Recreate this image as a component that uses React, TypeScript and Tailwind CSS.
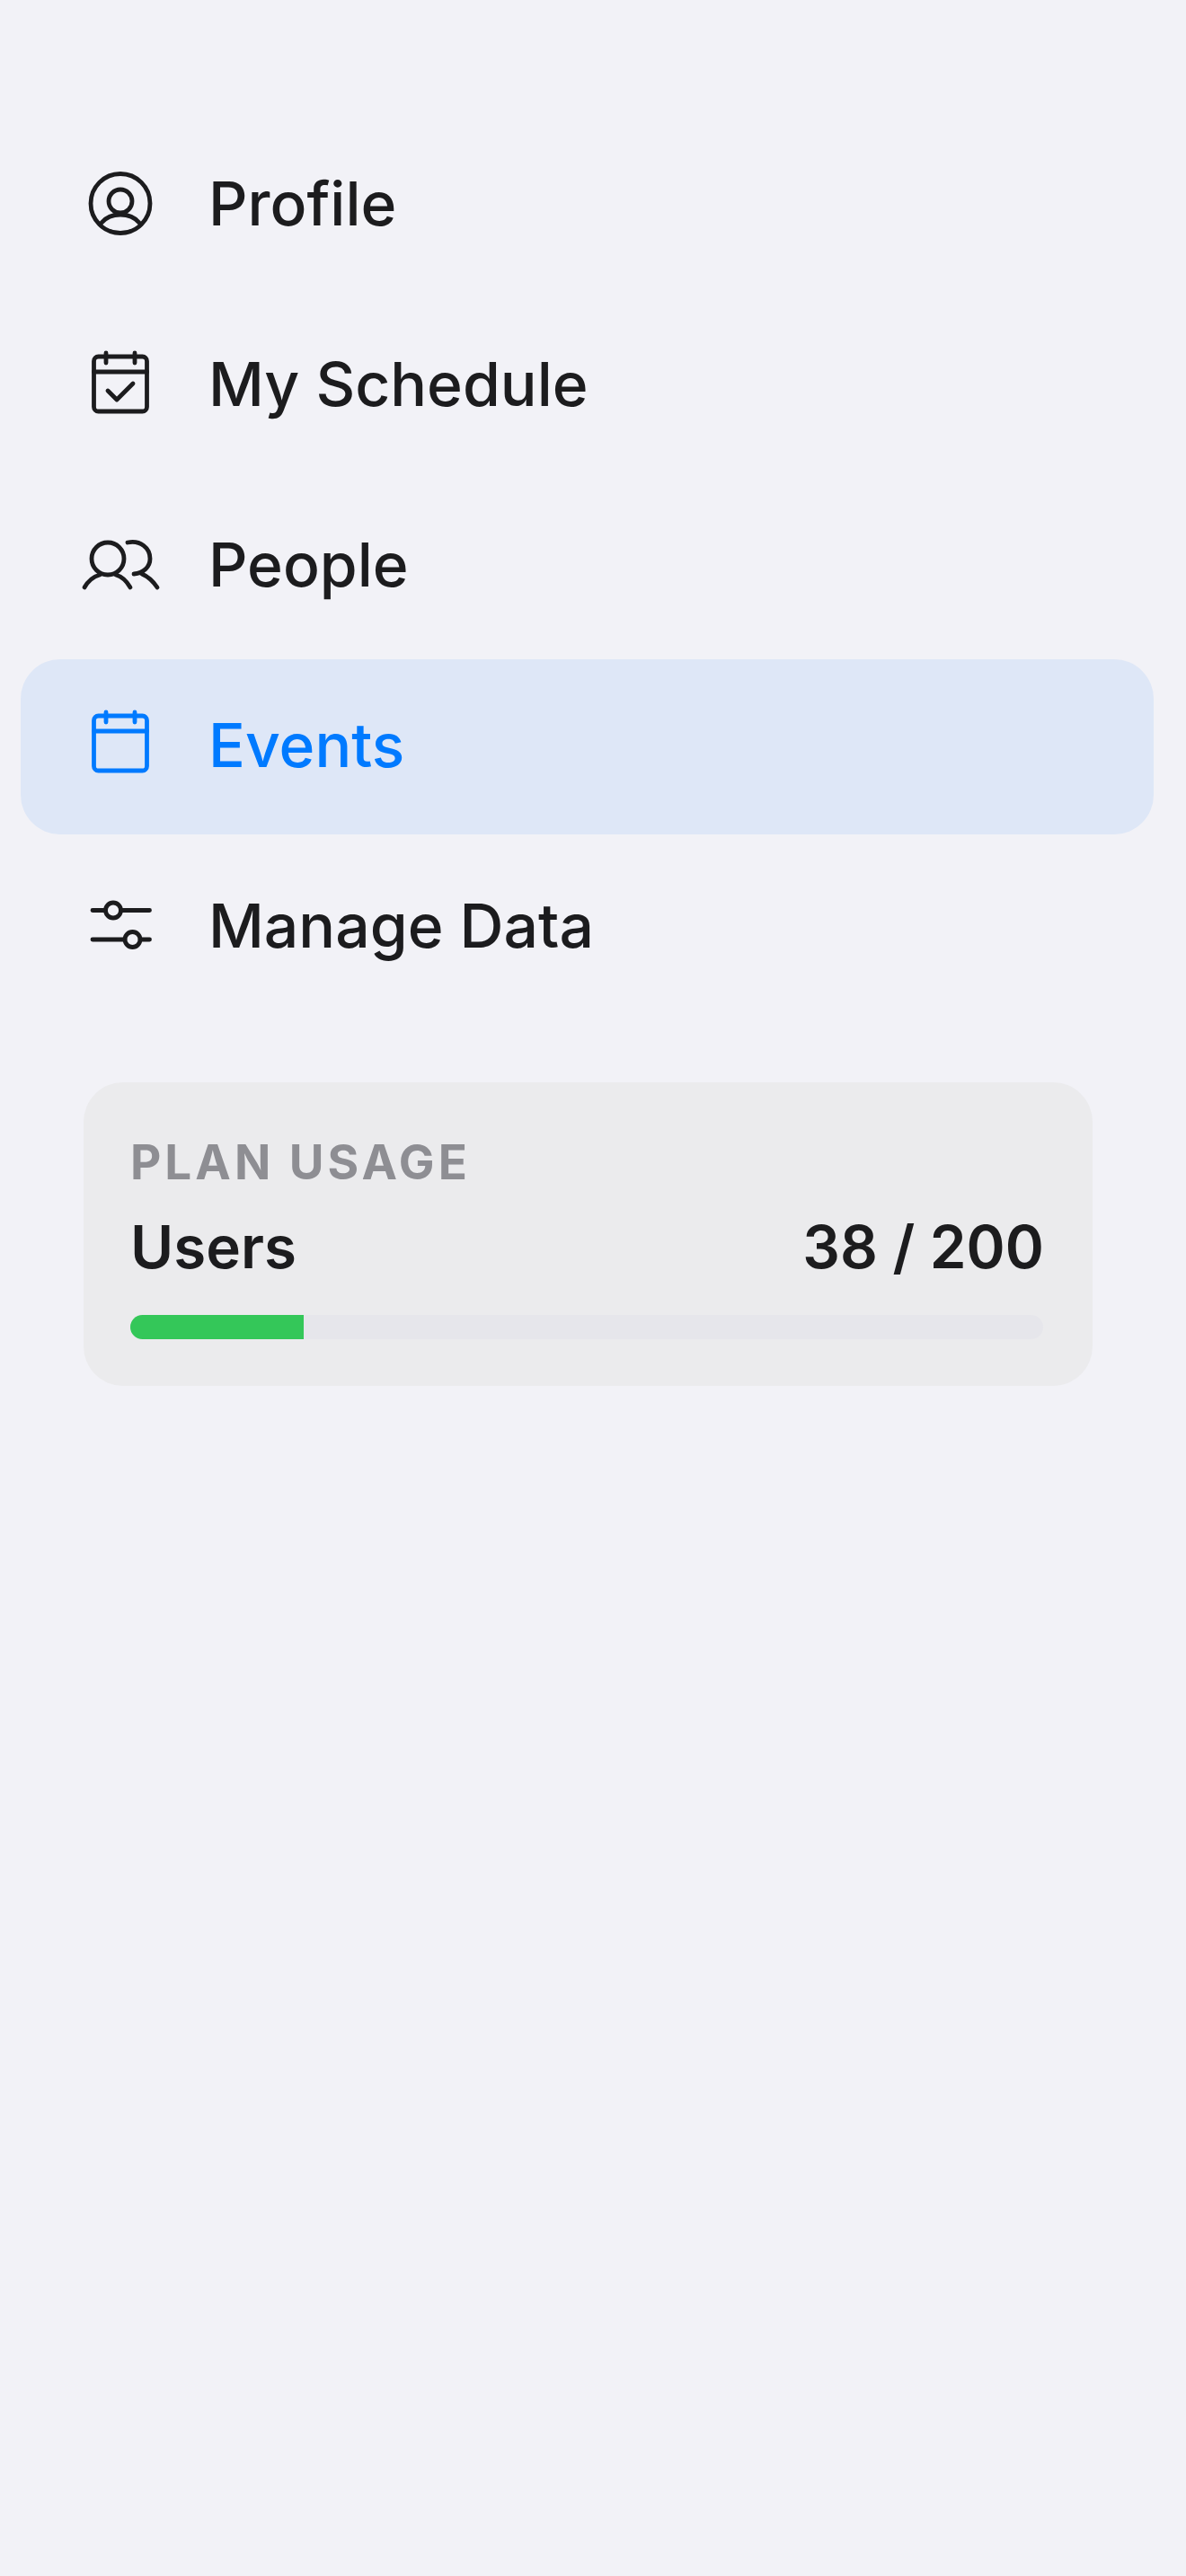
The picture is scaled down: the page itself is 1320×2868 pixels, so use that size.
const CalendarBase = () => (
  <>
    <rect x="20.5" y="19" width="59" height="61" rx="5" />
    <path d="M20.5 36h59M34 15v11M66 15v11" />
  </>
);

const icons: Record<string, React.ReactNode> = {
  profile: (
    <>
      <circle cx="50" cy="49.5" r="33" />
      <circle cx="50" cy="47" r="13" />
      <path d="M29 71C34 65 42 62 50 62C58 62 66 65 71 71" />
    </>
  ),
  schedule: (
    <>
      <CalendarBase />
      <path d="M36 57l10 10l18-18" />
    </>
  ),
  people: (
    <>
      <circle cx="36" cy="43" r="18" />
      <path d="M10 75C14 68 20 63 27 61M61 75C57 68 52 63 45 61" />
      <path d="M58 25C72 22 83 31 83 43C83 52 76 59 65 60M74 60C81 63 87 69 91 75" />
    </>
  ),
  events: (
    <g transform="translate(0 -2)">
      <CalendarBase />
    </g>
  ),
  manage: (
    <>
      <circle cx="42" cy="32.5" r="8.5" />
      <circle cx="63.5" cy="65" r="8.5" />
      <path d="M19 32.5h14.5M50.5 32.5h32M19 65h36M72 65h10.5" />
    </>
  ),
};

const navItems = [
  { label: "Profile", icon: "profile" },
  { label: "My Schedule", icon: "schedule" },
  { label: "People", icon: "people" },
  { label: "Events", icon: "events", active: true },
  { label: "Manage Data", icon: "manage" },
];

export default function App() {
  return (
    <div className="min-h-[2868px] bg-[#f2f2f7] pt-[131px] font-['Inter',sans-serif] text-[#1c1c1e]">
      {/* Nav */}
      <div className="ml-[23px] mr-[36px] flex flex-col gap-[6px]">
        {navItems.map((item) => (
          <div
            key={item.label}
            className={
              item.active
                ? "flex h-[195px] items-center gap-[48px] rounded-[44px] bg-[#dee7f7] pb-[4px] pl-[61px] text-[#007aff]"
                : "flex h-[195px] items-center gap-[48px] pb-[4px] pl-[61px]"
            }
          >
            <svg
              viewBox="0 0 100 100"
              className="h-[100px] w-[100px] shrink-0"
              fill="none"
              stroke="currentColor"
              strokeWidth="4.8"
              strokeLinecap="round"
              strokeLinejoin="round"
            >
              {icons[item.icon]}
            </svg>
            <span className="text-[67.8px] leading-none font-medium">{item.label}</span>
          </div>
        ))}
      </div>

      {/* Plan usage */}
      <div className="mt-[75px] ml-[93px] flex h-[338px] w-[1123px] flex-col rounded-[44px] bg-[#ebebed] px-[52px] pt-[59px]">
        <div className="text-[53px] leading-[60px] font-bold tracking-[4px] text-[#8e8e93]">PLAN USAGE</div>
        <div className="mt-[27px] flex justify-between pr-[2px] text-[65.5px] leading-[76px] font-semibold">
          <span>Users</span>
          <span>38 / 200</span>
        </div>
        <div className="mt-[37px] h-[27px] w-[1016px] overflow-hidden rounded-full bg-[#e6e6eb]">
          <div className="h-full bg-[#34c759]" style={{ width: `${(38 / 200) * 100}%` }} />
        </div>
      </div>
    </div>
  );
}
